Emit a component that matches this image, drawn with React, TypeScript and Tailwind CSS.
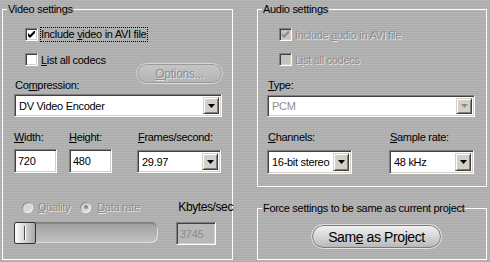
import clsx from "clsx";
import type { ReactNode } from "react";

// sunken 3D frame used by checkboxes, edits and combos
const sunken =
  "border border-t-[#808080] border-l-[#808080] border-b-white border-r-white shadow-[inset_1px_1px_0_#404040,inset_-1px_-1px_0_#d4d0c8]";
const raised =
  "border border-t-[#d4d0c8] border-l-[#d4d0c8] border-b-[#404040] border-r-[#404040] shadow-[inset_1px_1px_0_#fff,inset_-1px_-1px_0_#808080]";
const grayText = "text-[#8c8c8c] [text-shadow:1px_1px_0_#e4e4e4]";

function Check({ checked, disabled }: { checked?: boolean; disabled?: boolean }) {
  return (
    <span
      className={clsx(
        "flex h-[13px] w-[13px] shrink-0 items-center justify-center",
        sunken,
        disabled ? "bg-[#c4c4c4]" : "bg-white"
      )}
    >
      {checked && (
        <svg width="7" height="7" viewBox="0 0 7 7">
          <path d="M0 2v3l2 2 5-5V-1L2 4z" fill={disabled ? "#8c8c8c" : "#000"} />
        </svg>
      )}
    </span>
  );
}

function Radio({ on }: { on?: boolean }) {
  return (
    <span className="flex h-[11px] w-[11px] shrink-0 items-center justify-center rounded-full bg-[#d6d6d6] shadow-[inset_1px_1px_0_#8c8c8c,inset_-1px_-1px_0_#f2f2f2]">
      {on && <span className="h-[4px] w-[4px] rounded-full bg-[#8c8c8c]" />}
    </span>
  );
}

function Arrow({ disabled }: { disabled?: boolean }) {
  return (
    <span className={clsx("flex h-full w-[16px] shrink-0 items-center justify-center bg-[#d4d0c8]", raised)}>
      <svg width="7" height="4" viewBox="0 0 7 4">
        <path d="M0 0h7L3.5 4z" fill={disabled ? "#8c8c8c" : "#000"} />
      </svg>
    </span>
  );
}

function Combo({ value, className, disabled }: { value: string; className: string; disabled?: boolean }) {
  return (
    <div className={clsx("flex shrink-0 items-stretch bg-white p-[2px]", sunken, className)}>
      <span className={clsx("flex flex-1 items-center whitespace-nowrap pl-[2px]", disabled && "text-[#8c8c8c]")}>
        {value}
      </span>
      <Arrow disabled={disabled} />
    </div>
  );
}

function Edit({ value, className, disabled }: { value: string; className: string; disabled?: boolean }) {
  return (
    <div
      className={clsx(
        "flex shrink-0 items-center pl-[3px]",
        sunken,
        disabled ? "bg-[#b8b8b8] text-[#8c8c8c]" : "bg-white",
        className
      )}
    >
      {value}
    </div>
  );
}

function Group({ title, className, children }: { title: ReactNode; className: string; children: ReactNode }) {
  return (
    <fieldset className={clsx("min-w-0 shrink-0 border border-white", className)}>
      <legend className="ml-[4px] whitespace-nowrap px-[1px] leading-[14px]">{title}</legend>
      {children}
    </fieldset>
  );
}

export default function App() {
  return (
    <div className="flex h-[262px] w-[490px] overflow-hidden bg-[repeating-linear-gradient(180deg,#b5b5b5_0px,#b5b5b5_1px,#acacac_1px,#acacac_2px)] font-['Liberation_Sans',Arial,sans-serif] text-[11px] leading-[14px] tracking-[-0.3px] text-black">
      {/* video */}
      <Group title="Video settings" className="ml-[2px] mt-[2px] h-[258px] w-[231px]">
        <div className="ml-[22px] mt-[11px] flex h-[15px] items-center">
          <Check checked />
          <span className="ml-[2px] border border-dotted border-black pr-[1px] leading-[13px]">
            Include <u>v</u>ideo in AVI file
          </span>
        </div>

        <div className="mt-[10px] flex">
          <div className="flex flex-col">
            <div className="ml-[22px] flex h-[15px] items-center">
              <Check />
              <span className="ml-[3px]">
                <u>L</u>ist all codecs
              </span>
            </div>
            <div className="ml-[12px] mt-[11px]">
              Co<u>m</u>pression:
            </div>
          </div>
          <div className="ml-auto mr-[9px] mt-[11px] flex h-[21px] w-[87px] items-center justify-center rounded-full border border-[#d6d6d6] bg-[linear-gradient(#c6c6c6,#b4b4b4)] shadow-[inset_0_0_0_1px_#9a9a9a]">
            <span className={clsx("text-[12px]", grayText)}>
              <u>O</u>ptions...
            </span>
          </div>
        </div>

        <Combo value="DV Video Encoder" className="ml-[11px] mt-[2px] h-[23px] w-[208px]" />

        <div className="ml-[11px] mt-[13px] flex">
          <div className="flex w-[55px] flex-col">
            <span>
              <u>W</u>idth:
            </span>
            <Edit value="720" className="mt-[5px] h-[24px] w-[43px]" />
          </div>
          <div className="flex w-[68px] flex-col">
            <span>
              <u>H</u>eight:
            </span>
            <Edit value="480" className="mt-[5px] h-[24px] w-[43px]" />
          </div>
          <div className="flex flex-col">
            <span className="ml-[1px]">
              <u>F</u>rames/second:
            </span>
            <Combo value="29.97" className="mt-[6px] h-[23px] w-[84px]" />
          </div>
        </div>

        <div className="mt-[27px] flex h-[14px] items-center whitespace-nowrap">
          <span className="ml-[19px]">
            <Radio />
          </span>
          <span className={clsx("ml-[5px]", grayText)}>
            <u>Q</u>uality
          </span>
          <span className="ml-[10px]">
            <Radio on />
          </span>
          <span className={clsx("ml-[6px]", grayText)}>
            <u>D</u>ata rate
          </span>
          <span className="ml-auto mr-[-1px] text-[12px] tracking-[-0.4px]">Kbytes/sec</span>
        </div>

        <div className="mt-[8px] flex items-start">
          <div className="ml-[11px] flex h-[21px] w-[144px] shrink-0 items-center rounded-[7px] bg-[linear-gradient(#9e9e9e,#c2c2c2)] shadow-[inset_1px_2px_1px_#808080,inset_-1px_-1px_0_#dedede]">
            <div className="flex h-[22px] w-[22px] items-center justify-center rounded-[2px] border border-[#303030] bg-[linear-gradient(90deg,#ffffff,#a8a8a8)]">
              <span className="h-[14px] w-[2px] border-l border-[#505050] bg-white" />
            </div>
          </div>
          <Edit value="3745" disabled className="ml-[18px] h-[23px] w-[40px]" />
        </div>
      </Group>

      <div className="ml-[24px] flex shrink-0 flex-col">
        {/* audio */}
        <Group title="Audio settings" className="mt-[2px] h-[185px] w-[230px]">
          <div className="ml-[21px] mt-[11px] flex h-[15px] items-center">
            <Check checked disabled />
            <span className={clsx("ml-[3px]", grayText)}>
              Include <u>a</u>udio in AVI file
            </span>
          </div>
          <div className="ml-[21px] mt-[10px] flex h-[15px] items-center">
            <Check disabled />
            <span className={clsx("ml-[3px]", grayText)}>
              L<u>i</u>st all codecs
            </span>
          </div>
          <div className="ml-[10px] mt-[11px]">
            <u>T</u>ype:
          </div>
          <Combo value="PCM" disabled className="ml-[9px] mt-[3px] h-[22px] w-[208px]" />

          <div className="ml-[9px] mt-[13px] flex">
            <div className="flex w-[122px] flex-col">
              <span className="ml-[1px]">
                <u>C</u>hannels:
              </span>
              <Combo value="16-bit stereo" className="mt-[6px] h-[24px] w-[85px]" />
            </div>
            <div className="flex flex-col">
              <span className="ml-[1px]">
                <u>S</u>ample rate:
              </span>
              <Combo value="48 kHz" className="mt-[6px] h-[24px] w-[85px]" />
            </div>
          </div>
        </Group>

        {/* force */}
        <Group
          title={
            <>
              Force settin<u>g</u>s to be same as current project
            </>
          }
          className="mt-[14px] h-[59px] w-[230px]"
        >
          <div className="ml-[53px] mt-[9px] flex h-[25px] w-[131px] items-center justify-center rounded-full border border-[#e2e2e2] bg-[linear-gradient(#f4f4f4,#d6d6d6_50%,#b6b6b6)] shadow-[inset_0_0_0_1px_#7c7c7c]">
            <span className="text-[14px] leading-[16px] tracking-[-0.4px]">
              Sam<u>e</u> as Project
            </span>
          </div>
        </Group>
      </div>
    </div>
  );
}
